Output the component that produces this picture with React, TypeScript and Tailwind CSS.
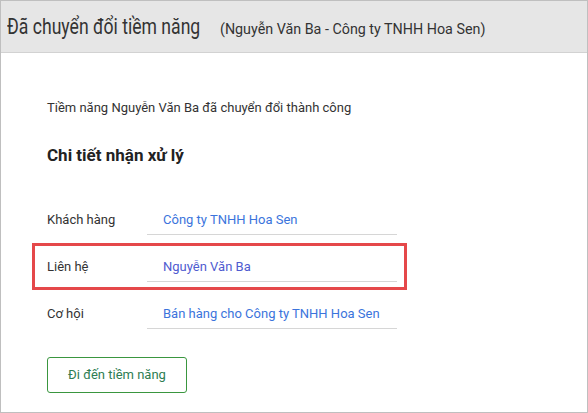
const rows = [
  { label: 'Khách hàng', value: 'Công ty TNHH Hoa Sen', color: 'text-[#3b74dc]', active: false },
  { label: 'Liên hệ', value: 'Nguyễn Văn Ba', color: 'text-[#4f5bd0]', active: true },
  { label: 'Cơ hội', value: 'Bán hàng cho Công ty TNHH Hoa Sen', color: 'text-[#3b74dc]', active: false },
];

export default function App() {
  return (
    <div className="w-[588px] h-[413px] border border-[#bfbfbf] bg-white font-['Roboto',sans-serif] text-[#333] overflow-hidden">
      {/* Header */}
      <div className="h-[52px] bg-[#e6e6e6] border-b border-[#d2d2d2] flex items-baseline pl-[6px] pt-[12px]">
        <h1 className="w-[193px] whitespace-nowrap text-[22px] leading-[27px] text-[#333]">
          <span className="inline-block origin-left scale-x-[0.8]">Đã chuyển đổi tiềm năng</span>
        </h1>
        <span className="ml-[20px] whitespace-nowrap text-[14.3px] text-[#333]">(Nguyễn Văn Ba - Công ty TNHH Hoa Sen)</span>
      </div>

      {/* Body */}
      <div className="pl-[46px] pt-[47px]">
        <p className="text-[13px] leading-[16px]">Tiềm năng Nguyễn Văn Ba đã chuyển đổi thành công</p>
        <h2 className="mt-[29px] text-[17px] leading-[20px] font-bold text-[#222]">Chi tiết nhận xử lý</h2>

        <div className="mt-[31px] flex flex-col">
          {rows.map((r) => (
            <div
              key={r.label}
              className={`-ml-[15px] w-[375px] h-[47px] border-[3px] pl-[12px] pr-[7px] flex ${
                r.active ? 'border-[#e5484a]' : 'border-transparent'
              }`}
            >
              <div className="w-[100px] pt-[13px] text-[13px] leading-[16px] text-[#333]">{r.label}</div>
              <div className={`w-[250px] h-[36px] pt-[13px] pl-[16px] border-b border-[#d6d6d6] text-[13px] leading-[16px] ${r.color}`}>
                {r.value}
              </div>
            </div>
          ))}
        </div>

        <button className="mt-[20px] w-[140px] h-[36px] border border-[#3a963f] rounded-[3px] text-[13px] text-[#2e7d52] bg-white">
          Đi đến tiềm năng
        </button>
      </div>
    </div>
  );
}
